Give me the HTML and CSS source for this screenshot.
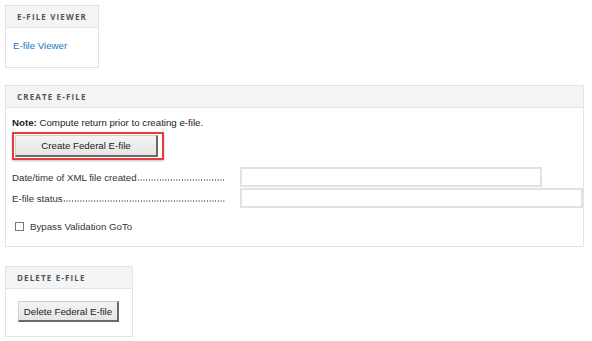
FILE: index.html
```html
<!DOCTYPE html>
<html>
<head>
<meta charset="utf-8">
<link rel="stylesheet" href="styles.css">
</head>
<body>
<div class="panel panel-viewer">
  <div class="panel-head">E-FILE VIEWER</div>
  <div class="panel-body body-viewer">
    <a class="link" href="#">E-file Viewer</a>
  </div>
</div>

<div class="panel panel-create">
  <div class="panel-head">CREATE E-FILE</div>
  <div class="panel-body body-create">
    <div class="note"><b>Note:</b> Compute return prior to creating e-file.</div>
    <div class="highlight"><button class="btn btn-create">Create Federal E-file</button></div>
    <div class="field-row field-first">
      <span class="label"><span class="label-text">Date/time of XML file created</span><span class="leader"></span></span>
      <span class="input input-short"></span>
    </div>
    <div class="field-row">
      <span class="label"><span class="label-text">E-file status</span><span class="leader"></span></span>
      <span class="input input-long"></span>
    </div>
    <label class="check-row"><span class="checkbox"></span>Bypass Validation GoTo</label>
  </div>
</div>

<div class="panel panel-delete">
  <div class="panel-head">DELETE E-FILE</div>
  <div class="panel-body body-delete">
    <button class="btn btn-delete">Delete Federal E-file</button>
  </div>
</div>
</body>
</html>
```
FILE: styles.css
```css
html, body { margin: 0; padding: 0; background: #fff; }
body {
  padding: 5px 0 0 5px;
  font-family: "Liberation Sans", Arial, sans-serif;
  font-size: 9.7px;
  color: #222;
  display: flex;
  flex-direction: column;
  align-items: flex-start;
}
.panel {
  border: 1px solid #e3e3e3;
  box-sizing: border-box;
  background: #fff;
}
.panel-viewer { width: 94px; height: 63px; }
.panel-create { width: 579px; height: 162px; margin-top: 17px; }
.panel-delete { width: 128px; height: 71px; margin-top: 19px; }
.panel-head {
  height: 22px;
  box-sizing: border-box;
  background: #f3f4f6;
  border-bottom: 1px solid #e3e3e3;
  font-family: "Open Sans", sans-serif;
  font-weight: 700;
  font-size: 8px;
  letter-spacing: 1.15px;
  color: #555;
  padding-left: 11px;
  line-height: 21px;
}
.body-viewer { padding: 12px 0 0 7px; }
.link { color: #1c78be; text-decoration: none; }
.body-create { padding: 9px 0 0 6px; }
.note { line-height: 12px; }
.note b { font-weight: 700; }
.highlight {
  display: inline-block;
  margin-top: 3px;
  border: 2px solid #e8393b;
  padding: 1px 4px 1px 1px;
  box-shadow: 0 1px 2px rgba(0,0,0,0.25);
}
.btn {
  font-family: "Liberation Sans", Arial, sans-serif;
  font-size: 9.7px;
  color: #222;
  background: linear-gradient(#f3f3f3, #e6e6e6);
  border: 1px solid #cfcfcf;
  border-right-color: #6a6a6a;
  border-bottom-color: #6a6a6a;
  border-right-width: 2px;
  border-bottom-width: 2px;
  padding: 0;
  margin: 0;
  display: block;
}
.btn-create { width: 143px; height: 22px; }
.field-row { display: flex; align-items: center; margin-top: 1px; height: 20px; }
.field-first { margin-top: 7px; }
.label { display: flex; align-items: baseline; width: 214px; margin-right: 14px; white-space: nowrap; color: #333; }
.leader {
  flex: 1;
  height: 8px;
  background-image: radial-gradient(circle, #777 0.55px, transparent 0.9px);
  background-size: 2.75px 2px;
  background-repeat: repeat-x;
  background-position: left bottom;
}
.input {
  display: block;
  height: 20px;
  box-sizing: border-box;
  border: 2px solid #e2e2e2;
  background: #fff;
}
.input-short { width: 302px; }
.input-long { width: 343px; }
.check-row { display: flex; align-items: center; margin-top: 13px; padding-left: 3px; color: #333; }
.checkbox {
  width: 9px; height: 9px;
  border: 1px solid #777;
  background: #fff;
  margin-right: 6px;
  box-sizing: border-box;
}
.body-delete { padding: 12px 0 0 12px; }
.btn-delete { width: 101px; height: 21px; }
```
